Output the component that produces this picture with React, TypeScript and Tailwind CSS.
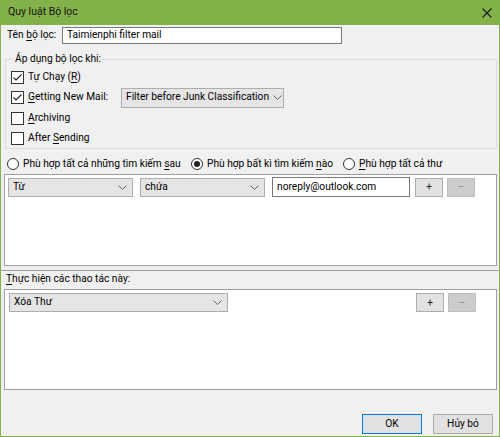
import React from "react";

function Chevron() {
  return (
    <svg width="9" height="5" viewBox="0 0 9 5" className="shrink-0">
      <polyline points="0.5,0.5 4.5,4.5 8.5,0.5" fill="none" stroke="#606060" strokeWidth="1" />
    </svg>
  );
}

function Check({ checked }: { checked?: boolean }) {
  return (
    <span className="w-[13px] h-[13px] border border-[#333] bg-white flex items-center justify-center shrink-0">
      {checked && (
        <svg width="11" height="11" viewBox="0 0 11 11">
          <polyline points="1.5,5.5 4,8 9.5,2.5" fill="none" stroke="#222" strokeWidth="1.1" />
        </svg>
      )}
    </span>
  );
}

function Radio({ checked }: { checked?: boolean }) {
  return (
    <span className="w-[12px] h-[12px] rounded-full border border-[#333] bg-white flex items-center justify-center shrink-0">
      {checked && <span className="w-[6px] h-[6px] rounded-full bg-[#222]" />}
    </span>
  );
}

function Select({ label, className }: { label: string; className: string }) {
  return (
    <div
      className={`flex items-center justify-between gap-[4px] border border-[#adadad] bg-[#e5e5e5] pl-[4px] pr-[5px] ${className}`}
    >
      <span>{label}</span>
      <Chevron />
    </div>
  );
}

function SmallButton({ label, disabled }: { label: string; disabled?: boolean }) {
  return (
    <div
      className={`w-[28px] h-[19px] flex items-center justify-center border text-[10px] ${
        disabled
          ? "bg-[#cccccc] border-[#bfbfbf] text-[#8a8a8a]"
          : "bg-[#e1e1e1] border-[#adadad] text-[#222]"
      }`}
    >
      {label}
    </div>
  );
}

export default function App() {
  return (
    <div className="w-[500px] h-[437px] bg-[#84b24a] flex flex-col px-px pb-px text-[10.2px] text-black font-['Roboto',sans-serif] leading-none whitespace-nowrap">
      {/* Title bar */}
      <div className="h-[25px] flex items-center justify-between pl-[7px] pr-[7px]">
        <span className="text-[10.5px] text-[#111]">Quy luật Bộ lọc</span>
        <svg width="10" height="10" viewBox="0 0 10 10">
          <path d="M0.5 0.5 L9.5 9.5 M9.5 0.5 L0.5 9.5" stroke="#1a1a1a" strokeWidth="1.1" />
        </svg>
      </div>

      {/* Body */}
      <div className="flex-1 bg-[#f0f0f0] flex flex-col">
        {/* Filter name */}
        <div className="mt-[2px] flex items-center pl-[6px]">
          <span className="w-[55px]">
            Tên <span className="underline underline-offset-2">b</span>ộ lọc:
          </span>
          <div className="w-[280px] h-[17px] border border-[#7a7a7a] bg-white flex items-center pl-[4px]">
            Taimienphi filter mail
          </div>
        </div>

        {/* Apply when */}
        <fieldset className="mt-[7px] ml-[4px] mr-[2px] border border-[#dcdcdc] pl-[5px]">
          <legend className="ml-[3px] px-[1px] leading-[16px]">Áp dụng bộ lọc khi:</legend>
          <div className="h-[20px] flex items-center gap-[4px]">
            <Check checked />
            <span>
              Tự Chạy (<span className="underline underline-offset-2">R</span>)
            </span>
          </div>
          <div className="h-[21px] flex items-center gap-[4px]">
            <Check checked />
            <span className="w-[89px]">
              <span className="underline underline-offset-2">G</span>etting New Mail:
            </span>
            <Select label="Filter before Junk Classification" className="w-[163px] h-[20px]" />
          </div>
          <div className="h-[20px] flex items-center gap-[4px]">
            <Check />
            <span>
              <span className="underline underline-offset-2">A</span>rchiving
            </span>
          </div>
          <div className="h-[20px] flex items-center gap-[4px]">
            <Check />
            <span>
              After <span className="underline underline-offset-2">S</span>ending
            </span>
          </div>
        </fieldset>

        {/* Match mode */}
        <div className="mt-[6px] h-[18px] flex items-center pl-[6px]">
          <div className="w-[184px] flex items-center gap-[4px]">
            <Radio />
            <span>
              Phù hợp tất cả những tìm kiếm <span className="underline underline-offset-2">s</span>au
            </span>
          </div>
          <div className="w-[152px] flex items-center gap-[4px]">
            <Radio checked />
            <span>
              Phù hợp bất kì tìm kiếm <span className="underline underline-offset-2">n</span>ào
            </span>
          </div>
          <div className="flex items-center gap-[4px]">
            <Radio />
            <span>
              <span className="underline underline-offset-2">P</span>hù hợp tất cả thư
            </span>
          </div>
        </div>

        {/* Criteria list */}
        <div className="mt-[1px] ml-[3px] w-[493px] h-[92px] border border-[#a0a0a0] bg-white pt-[2px] pl-[3px]">
          <div className="flex items-center">
            <Select label="Từ" className="w-[125px] h-[19px]" />
            <Select label="chứa" className="ml-[7px] w-[125px] h-[19px]" />
            <div className="ml-[7px] w-[138px] h-[20px] border border-[#7a7a7a] bg-white flex items-center pl-[4px]">
              noreply@outlook.com
            </div>
            <div className="ml-[5px] flex gap-[4px]">
              <SmallButton label="+" />
              <SmallButton label="–" disabled />
            </div>
          </div>
        </div>

        {/* Splitter */}
        <div className="mt-[4px] h-px bg-[#a0a0a0]" />
        <div className="h-[17px] flex items-center pl-[5px]">
          <span>
            <span className="underline underline-offset-2">T</span>hực hiện các thao tác này:
          </span>
        </div>

        {/* Actions list */}
        <div className="mt-[1px] ml-[3px] w-[493px] h-[101px] border border-[#a0a0a0] bg-white pt-[3px] pl-[4px] pr-[20px]">
          <div className="flex items-center justify-between">
            <Select label="Xóa Thư" className="w-[219px] h-[19px]" />
            <div className="flex gap-[4px]">
              <SmallButton label="+" />
              <SmallButton label="–" disabled />
            </div>
          </div>
        </div>

        {/* Dialog buttons */}
        <div className="mt-auto pb-[2px] pr-[6px] flex justify-end gap-[11px]">
          <div className="w-[60px] h-[20px] border border-[#0078d7] bg-[#e1e1e1] flex items-center justify-center">
            OK
          </div>
          <div className="w-[60px] h-[20px] border border-[#adadad] bg-[#e1e1e1] flex items-center justify-center">
            Hủy bỏ
          </div>
        </div>
      </div>
    </div>
  );
}
